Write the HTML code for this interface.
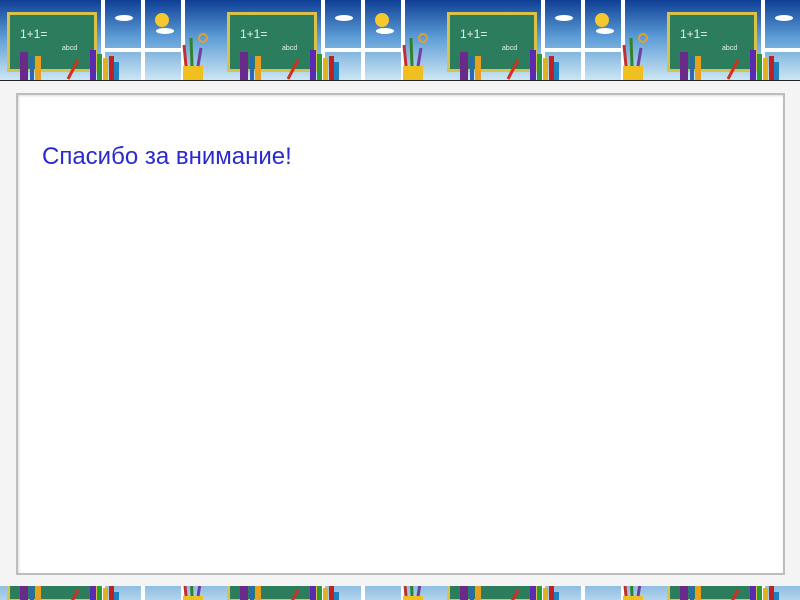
<!DOCTYPE html>
<html><head><meta charset="utf-8"><style>
html,body{margin:0;padding:0;width:800px;height:600px;overflow:hidden;background:#f2f2f2}
.frame{position:absolute;left:0;top:81px;width:800px;height:505px;background:#f4f4f4}
.box{position:absolute;left:16px;top:93px;width:765px;height:478px;background:#fff;border:2px solid #bdbdbd;box-shadow:inset 1px 1px 2px #ddd}
.t{position:absolute;left:42px;top:143px;font:24px "Liberation Sans",sans-serif;color:#2a2ad0}
</style></head><body>
<svg width="800" height="600" style="position:absolute;left:0;top:0">
<defs>
<linearGradient id="sky" x1="0" y1="0" x2="0" y2="1">
<stop offset="0" stop-color="#0f3f95"/><stop offset="0.45" stop-color="#5b9bd5"/><stop offset="1" stop-color="#cfe8f4"/></linearGradient>
<g id="tile">
<rect x="0" y="0" width="220" height="81" fill="url(#sky)"/>
<rect x="101" y="0" width="4" height="80" fill="#fff"/>
<rect x="141" y="0" width="4" height="80" fill="#fff"/>
<rect x="181" y="0" width="4" height="80" fill="#fff"/>
<rect x="101" y="48" width="84" height="4" fill="#fff"/>
<rect x="7" y="12" width="90" height="60" fill="#d9c24a"/>
<rect x="10" y="15" width="84" height="54" fill="#2b7d5e"/>
<text x="20" y="38" font-family="Liberation Sans" font-size="12" fill="#e8f4e8">1+1=</text>
<text x="62" y="50" font-family="Liberation Sans" font-size="7" fill="#e8f4e8">abcd</text>
<ellipse cx="124" cy="18" rx="9" ry="3" fill="#fff"/>
<circle cx="162" cy="20" r="7" fill="#f5c830"/>
<ellipse cx="165" cy="31" rx="9" ry="3" fill="#fff"/>
<rect x="20" y="52" width="8" height="28" fill="#6a2a8a"/>
<rect x="30" y="56" width="4" height="24" fill="#2a6ab0"/>
<rect x="35" y="56" width="6" height="24" fill="#e8a020"/>
<rect x="90" y="50" width="6" height="30" fill="#5a2ab0"/>
<rect x="97" y="54" width="5" height="26" fill="#2a9a3a"/>
<rect x="103" y="58" width="5" height="22" fill="#e0b020"/>
<rect x="109" y="56" width="5" height="24" fill="#c02020"/>
<rect x="114" y="62" width="5" height="18" fill="#2080c0"/>
<line x1="68" y1="79" x2="78" y2="60" stroke="#d03020" stroke-width="3"/>
<rect x="183" y="66" width="20" height="14" fill="#f0c020"/>
<line x1="186" y1="66" x2="184" y2="45" stroke="#c03030" stroke-width="3"/>
<line x1="192" y1="66" x2="191" y2="38" stroke="#308030" stroke-width="3"/>
<line x1="198" y1="66" x2="201" y2="48" stroke="#7040a0" stroke-width="3"/>
<circle cx="203" cy="38" r="4" fill="none" stroke="#e0a030" stroke-width="2"/>
</g>
</defs>
<use href="#tile" x="0" y="0"/><use href="#tile" x="220" y="0"/><use href="#tile" x="440" y="0"/><use href="#tile" x="660" y="0"/>
<rect x="0" y="80" width="800" height="1.5" fill="#222"/>
<g transform="translate(0,530)"><use href="#tile" x="0" y="0"/><use href="#tile" x="220" y="0"/><use href="#tile" x="440" y="0"/><use href="#tile" x="660" y="0"/></g>
</svg>
<div class="frame"></div>
<div class="box"></div>
<div class="t">Спасибо за внимание!</div>
</body></html>
